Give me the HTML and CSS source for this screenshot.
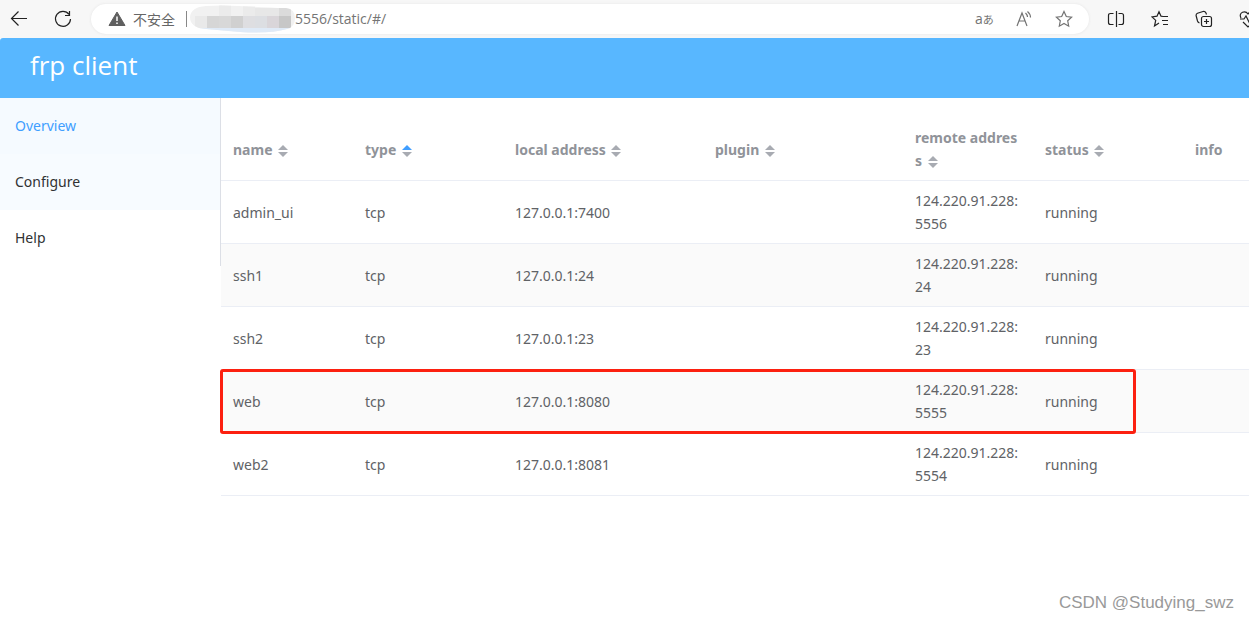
FILE: index.html
```html
<!DOCTYPE html>
<html lang="en">
<head>
<meta charset="utf-8">
<title>frp client</title>
<link rel="stylesheet" href="styles.css">
</head>
<body>
<div class="browser">
  <button class="tool" aria-label="Back"><svg width="18" height="18" viewBox="0 0 18 18"><path d="M17 8.500H1.500M8.500 1.500l-7 7 7 7"/></svg></button>
  <button class="tool reload" aria-label="Reload"><svg width="18" height="18" viewBox="0 0 18 18"><path d="M15 4.300A7.500 7.500 0 1 0 16.500 9M15.500 1v4.500H11"/></svg></button>
  <div class="address">
    <svg class="warn" width="18" height="16" viewBox="0 0 18 16"><path d="M9 1L17 14.500H1z" fill="#5f5f5f" stroke="#5f5f5f" stroke-linejoin="round"/><path d="M9 5.500v4.500M9 11.500v1.500" stroke="#fff" stroke-width="1.500"/></svg>
    <span class="insecure">不安全</span>
    <span class="bar"></span>
    <svg class="mosaic" width="105" height="30" viewBox="0 0 105 30">
      <defs><clipPath id="blob"><path d="M16 2C40 0 70 4 96 4Q105 5 105 14T97 25Q80 30 50 28L16 25Q0 24 0 13Q1 3 16 2z"/></clipPath></defs>
      <g clip-path="url(#blob)" shape-rendering="crispEdges">
        <path d="M0 0h105v30H0z" fill="#f1f1f1"/><path d="M0 24h105v6H0z" fill="#dfeaf7"/>
        <path d="M5 12h12v12H5z" fill="#e9e9e9"/><path d="M17 12h12v12H17z" fill="#d6d6d6"/><path d="M29 12h12v12H29z" fill="#d8d8d8"/><path d="M41 12h12v12H41z" fill="#d0d0d0"/><path d="M53 12h12v12H53z" fill="#dedee1"/><path d="M65 12h12v12H65z" fill="#dcdee2"/><path d="M77 12h12v12H77z" fill="#d9d5d9"/><path d="M89 12h12v12H89z" fill="#c7c7c7"/>
        <path d="M29 0h12v12H29zM53 0h12v12H53z" fill="#ebebeb"/><path d="M65 4h24v8H65z" fill="#e7e7e7"/><path d="M89 4h12v8H89z" fill="#dbdbdb"/>
      </g>
    </svg>
    <input class="url" aria-label="Address" value="5556/static/#/">
    <button class="tool translate" aria-label="Translate">a<span class="kana">あ</span></button>
    <button class="tool read" aria-label="Read aloud"><svg width="18" height="18" viewBox="0 0 18 18"><path d="M2 16L7 3l5 13M4 11h6M10.500 3q2 2 2 4M12.500 1.500q3 2.500 3 6"/></svg></button>
    <button class="tool fav" aria-label="Add to favorites"><svg width="18" height="18" viewBox="0 0 18 18"><path d="M9 1.500l2.300 5 5.300.6-3.900 3.700 1 5.400L9 13.500l-4.700 2.700 1-5.400L1.400 7.100l5.300-.6z"/></svg></button>
  </div>
  <div class="tools">
    <button class="tool" aria-label="Split screen"><svg width="18" height="18" viewBox="0 0 18 18"><path d="M6.500 3.500h-3q-2 0-2 2v7q0 2 2 2h3M11.500 3.500h3q2 0 2 2v7q0 2-2 2h-3M9.500 1v16"/></svg></button>
    <button class="tool" aria-label="Favorites"><svg width="18" height="18" viewBox="0 0 18 18"><path d="M12 6.500L10 6.200 8 1.700 6 6.200l-5 .7 3.700 3.500-1.200 5.600L8 13M12 6.500h5M11 10.500h6M12 14.500h5"/></svg></button>
    <button class="tool" aria-label="Collections"><svg width="18" height="18" viewBox="0 0 18 18"><rect x="6.500" y="6.500" width="10" height="10" rx="2"/><path d="M11.500 9v5M9 11.500h5M4.500 13Q3 12.500 2.500 11L1.200 6Q.7 4 2.500 3.200L8 1.500q2-.5 3 1.500l.5 1.500"/></svg></button>
    <button class="tool" aria-label="Browser essentials"><svg width="18" height="18" viewBox="0 0 18 18"><path d="M2 8Q0 4 3.500 2.300 7 1 9 4q2-3 5.500-1.700Q18 4 16 8M1 9h4l2-3 3 6 2-3h4M4 12l5 5 5-5"/></svg></button>
  </div>
</div>
<header class="header"><a href="#/" class="brand">frp client</a></header>
<div class="layout">
  <nav class="menu">
    <a href="#/" class="item active">Overview</a>
    <a href="#/configure" class="item hover">Configure</a>
    <a href="#/help" class="item">Help</a>
  </nav>
  <main class="content">
    <table class="proxies">
      <colgroup><col class="c-name"><col class="c-type"><col class="c-wide"><col class="c-wide"><col class="c-remote"><col class="c-status"><col></colgroup>
      <thead><tr>
        <th>name <button class="sort" aria-label="Sort by name"></button></th>
        <th>type <button class="sort asc" aria-label="Sort by type"></button></th>
        <th>local address <button class="sort" aria-label="Sort by local address"></button></th>
        <th>plugin <button class="sort" aria-label="Sort by plugin"></button></th>
        <th>remote address <button class="sort" aria-label="Sort by remote address"></button></th>
        <th>status <button class="sort" aria-label="Sort by status"></button></th>
        <th>info</th>
      </tr></thead>
      <tbody>
        <tr><td>admin_ui</td><td>tcp</td><td>127.0.0.1:7400</td><td></td><td>124.220.91.228:5556</td><td>running</td><td></td></tr>
        <tr><td>ssh1</td><td>tcp</td><td>127.0.0.1:24</td><td></td><td>124.220.91.228:24</td><td>running</td><td></td></tr>
        <tr><td>ssh2</td><td>tcp</td><td>127.0.0.1:23</td><td></td><td>124.220.91.228:23</td><td>running</td><td></td></tr>
        <tr class="marked"><td>web</td><td>tcp</td><td>127.0.0.1:8080</td><td></td><td>124.220.91.228:5555</td><td>running</td><td></td></tr>
        <tr><td>web2</td><td>tcp</td><td>127.0.0.1:8081</td><td></td><td>124.220.91.228:5554</td><td>running</td><td></td></tr>
      </tbody>
    </table>
  </main>
</div>
<footer class="watermark">CSDN @Studying_swz</footer>
</body>
</html>
```
FILE: styles.css
```css
*, *::before, *::after { box-sizing: border-box; }
body {
  margin: 0;
  min-height: 100vh;
  display: flex;
  flex-direction: column;
  overflow-x: hidden;
  background: #fff;
  font: 14px/23px "Noto Sans", "Open Sans", "Noto Sans CJK SC", sans-serif;
}
button { padding: 0; border: 0; background: none; font: inherit; }
a { text-decoration: none; }

.browser {
  display: flex;
  align-items: center;
  height: 38px;
  padding-left: 10px;
  background: #f7f7f7;
  overflow: hidden;
}
.tool { display: block; flex: none; width: 18px; height: 18px; color: #222; }
.tool svg { display: block; fill: none; stroke: currentColor; stroke-width: 1.2; }
.reload { margin-left: 26px; }
.address {
  flex: 1;
  min-width: 0;
  display: flex;
  align-items: center;
  height: 30px;
  margin-left: 19px;
  padding: 0 16px 0 17px;
  border-radius: 15px;
  background: #fff;
  box-shadow: 0 0 3px #e4e4e4;
}
.address .tool { color: #737373; }
.warn, .mosaic { flex: none; }
.insecure { flex: none; margin-left: 7px; color: #666; font-family: "Noto Sans CJK SC", sans-serif; line-height: 20px; }
.bar { width: 1px; height: 16px; margin: 0 3px 0 11px; background: #888; }
.url {
  flex: 1;
  min-width: 0;
  padding: 0;
  border: 0;
  outline: 0;
  background: none;
  color: #757575;
  font: 14px/20px "Open Sans", sans-serif;
}
.address .translate { font: 14px/16px "Open Sans", "Noto Sans CJK JP", sans-serif; white-space: nowrap; }
.kana { font-size: 11px; }
.read, .fav { margin-left: 22px; }
.tools { display: flex; gap: 26px; width: 142px; margin-left: 18px; }

.header { height: 60px; padding-left: 30px; background: #58b7ff; border-top-left-radius: 3px; }
.brand { color: #fff; font: 26px/54px "Open Sans", sans-serif; }

.layout { display: flex; align-items: flex-start; }
.menu { flex: none; width: 221px; height: 168px; border-right: 1px solid #dcdfe6; }
.item { display: block; height: 56px; padding-left: 15px; color: #303133; line-height: 56px; }
.active { background: #f5faff; color: #409eff; }
.hover { background: #f7fbff; }

.content { flex: 1; min-width: 0; padding-top: 20px; }
.proxies { width: 100%; table-layout: fixed; border-collapse: separate; border-spacing: 0; color: #606266; }
.c-name { width: 132px; }
.c-type, .c-status { width: 150px; }
.c-wide { width: 200px; }
.c-remote { width: 130px; }
th, td {
  height: 63px;
  padding: 8px 12px;
  border-bottom: 1px solid #ebeef5;
  text-align: left;
  vertical-align: middle;
  word-break: break-all;
}
th { color: #909399; font-weight: 700; }
tbody tr:nth-child(even) { background: #fafafa; }
.sort { display: inline-flex; flex-direction: column; gap: 2px; margin-left: 2px; vertical-align: middle; }
.sort::before, .sort::after { content: ""; border: 5px solid transparent; }
.sort::before { border-top: 0; border-bottom-color: #a8abb2; }
.sort::after { border-bottom: 0; border-top-color: #a8abb2; }
.asc::before { border-bottom-color: #409eff; }
.marked { position: relative; }
.marked td:first-child::after {
  content: "";
  position: absolute;
  top: -1px;
  left: -1px;
  width: 916px;
  height: 65px;
  border: 3px solid #fc2010;
  border-radius: 3px;
}
.watermark {
  margin-top: auto;
  padding: 0 15px 8px 0;
  color: #999;
  font: 17px/22px "Liberation Sans", sans-serif;
  text-align: right;
}
```
